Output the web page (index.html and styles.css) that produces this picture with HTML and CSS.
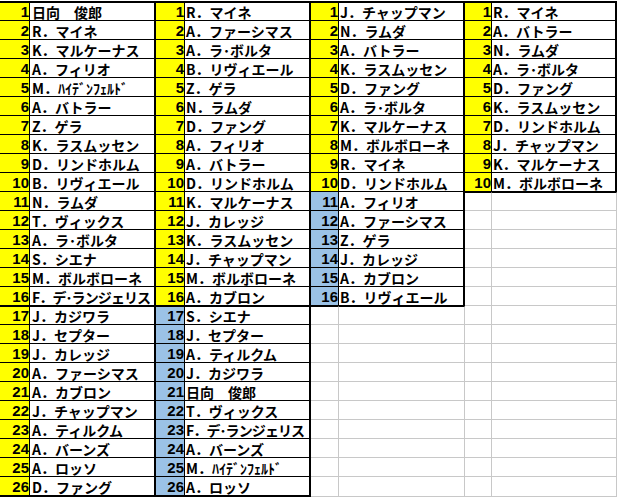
FILE: index.html
```html
<!DOCTYPE html>
<html lang="ja">
<head>
<meta charset="utf-8">
<title>Sheet</title>
<link rel="stylesheet" href="styles.css">
</head>
<body>
<div class="sheet">
  <div class="pair p1">
    <div class="c n">1</div><div class="c t">日向　俊郎</div>
    <div class="c n">2</div><div class="c t">R．マイネ</div>
    <div class="c n">3</div><div class="c t">K．マルケーナス</div>
    <div class="c n">4</div><div class="c t">A．フィリオ</div>
    <div class="c n">5</div><div class="c t">M．ﾊｲﾃﾞﾝﾌｪﾙﾄﾞ</div>
    <div class="c n">6</div><div class="c t">A．バトラー</div>
    <div class="c n">7</div><div class="c t">Z．ゲラ</div>
    <div class="c n">8</div><div class="c t">K．ラスムッセン</div>
    <div class="c n">9</div><div class="c t">D．リンドホルム</div>
    <div class="c n">10</div><div class="c t">B．リヴィエール</div>
    <div class="c n">11</div><div class="c t">N．ラムダ</div>
    <div class="c n">12</div><div class="c t">T．ヴィックス</div>
    <div class="c n">13</div><div class="c t">A．ラ･ボルタ</div>
    <div class="c n">14</div><div class="c t">S．シエナ</div>
    <div class="c n">15</div><div class="c t">M．ボルボローネ</div>
    <div class="c n">16</div><div class="c t tight">F．デ･ランジェリス</div>
    <div class="c n tt">17</div><div class="c t tt">J．カジワラ</div>
    <div class="c n">18</div><div class="c t">J．セプター</div>
    <div class="c n">19</div><div class="c t">J．カレッジ</div>
    <div class="c n">20</div><div class="c t">A．ファーシマス</div>
    <div class="c n">21</div><div class="c t">A．カブロン</div>
    <div class="c n">22</div><div class="c t">J．チャップマン</div>
    <div class="c n">23</div><div class="c t">A．ティルクム</div>
    <div class="c n">24</div><div class="c t">A．バーンズ</div>
    <div class="c n">25</div><div class="c t">A．ロッソ</div>
    <div class="c n tb">26</div><div class="c t tb">D．ファング</div>
  </div>
  <div class="pair p2">
    <div class="c n">1</div><div class="c t">R．マイネ</div>
    <div class="c n">2</div><div class="c t">A．ファーシマス</div>
    <div class="c n">3</div><div class="c t">A．ラ･ボルタ</div>
    <div class="c n">4</div><div class="c t">B．リヴィエール</div>
    <div class="c n">5</div><div class="c t">Z．ゲラ</div>
    <div class="c n">6</div><div class="c t">N．ラムダ</div>
    <div class="c n">7</div><div class="c t">D．ファング</div>
    <div class="c n">8</div><div class="c t">A．フィリオ</div>
    <div class="c n">9</div><div class="c t">A．バトラー</div>
    <div class="c n">10</div><div class="c t">D．リンドホルム</div>
    <div class="c n">11</div><div class="c t">K．マルケーナス</div>
    <div class="c n">12</div><div class="c t">J．カレッジ</div>
    <div class="c n">13</div><div class="c t">K．ラスムッセン</div>
    <div class="c n">14</div><div class="c t">J．チャップマン</div>
    <div class="c n">15</div><div class="c t">M．ボルボローネ</div>
    <div class="c n">16</div><div class="c t">A．カブロン</div>
    <div class="c n b tt">17</div><div class="c t tt">S．シエナ</div>
    <div class="c n b">18</div><div class="c t">J．セプター</div>
    <div class="c n b">19</div><div class="c t">A．ティルクム</div>
    <div class="c n b">20</div><div class="c t">J．カジワラ</div>
    <div class="c n b">21</div><div class="c t">日向　俊郎</div>
    <div class="c n b">22</div><div class="c t">T．ヴィックス</div>
    <div class="c n b">23</div><div class="c t tight">F．デ･ランジェリス</div>
    <div class="c n b">24</div><div class="c t">A．バーンズ</div>
    <div class="c n b">25</div><div class="c t">M．ﾊｲﾃﾞﾝﾌｪﾙﾄﾞ</div>
    <div class="c n b tb">26</div><div class="c t tb">A．ロッソ</div>
  </div>
  <div class="pair p3">
    <div class="c n">1</div><div class="c t">J．チャップマン</div>
    <div class="c n">2</div><div class="c t">N．ラムダ</div>
    <div class="c n">3</div><div class="c t">A．バトラー</div>
    <div class="c n">4</div><div class="c t">K．ラスムッセン</div>
    <div class="c n">5</div><div class="c t">D．ファング</div>
    <div class="c n">6</div><div class="c t">A．ラ･ボルタ</div>
    <div class="c n">7</div><div class="c t">K．マルケーナス</div>
    <div class="c n">8</div><div class="c t">M．ボルボローネ</div>
    <div class="c n">9</div><div class="c t">R．マイネ</div>
    <div class="c n">10</div><div class="c t">D．リンドホルム</div>
    <div class="c n b">11</div><div class="c t">A．フィリオ</div>
    <div class="c n b">12</div><div class="c t">A．ファーシマス</div>
    <div class="c n b">13</div><div class="c t">Z．ゲラ</div>
    <div class="c n b">14</div><div class="c t">J．カレッジ</div>
    <div class="c n b">15</div><div class="c t">A．カブロン</div>
    <div class="c n b">16</div><div class="c t">B．リヴィエール</div>
    <div class="c e tt"></div><div class="c e tt"></div>
    <div class="c e"></div><div class="c e"></div>
    <div class="c e"></div><div class="c e"></div>
    <div class="c e"></div><div class="c e"></div>
    <div class="c e"></div><div class="c e"></div>
    <div class="c e"></div><div class="c e"></div>
    <div class="c e"></div><div class="c e"></div>
    <div class="c e"></div><div class="c e"></div>
    <div class="c e"></div><div class="c e"></div>
    <div class="c e"></div><div class="c e"></div>
  </div>
  <div class="pair p4">
    <div class="c n">1</div><div class="c t">R．マイネ</div>
    <div class="c n">2</div><div class="c t">A．バトラー</div>
    <div class="c n">3</div><div class="c t">N．ラムダ</div>
    <div class="c n">4</div><div class="c t">A．ラ･ボルタ</div>
    <div class="c n">5</div><div class="c t">D．ファング</div>
    <div class="c n">6</div><div class="c t">K．ラスムッセン</div>
    <div class="c n">7</div><div class="c t">D．リンドホルム</div>
    <div class="c n">8</div><div class="c t">J．チャップマン</div>
    <div class="c n">9</div><div class="c t">K．マルケーナス</div>
    <div class="c n">10</div><div class="c t">M．ボルボローネ</div>
    <div class="c e tt"></div><div class="c e tt"></div>
    <div class="c e"></div><div class="c e"></div>
    <div class="c e"></div><div class="c e"></div>
    <div class="c e"></div><div class="c e"></div>
    <div class="c e"></div><div class="c e"></div>
    <div class="c e"></div><div class="c e"></div>
    <div class="c e"></div><div class="c e"></div>
    <div class="c e"></div><div class="c e"></div>
    <div class="c e"></div><div class="c e"></div>
    <div class="c e"></div><div class="c e"></div>
    <div class="c e"></div><div class="c e"></div>
    <div class="c e"></div><div class="c e"></div>
    <div class="c e"></div><div class="c e"></div>
    <div class="c e"></div><div class="c e"></div>
    <div class="c e"></div><div class="c e"></div>
    <div class="c e"></div><div class="c e"></div>
  </div>
</div>
</body>
</html>
```

FILE: styles.css
```css
html, body {
  margin: 0;
  padding: 0;
  background: #ffffff;
}

.sheet {
  display: flex;
  padding-top: 1px;
  width: 617px;
  overflow: hidden;
}

.pair {
  display: grid;
  grid-template-rows: 20px repeat(24, 19px) 20px;
  flex: none;
}

.p1 { grid-template-columns: 30px 126px; }
.p2 { grid-template-columns: 29px 126px; }
.p3 { grid-template-columns: 28px 126px; }
.p4 { grid-template-columns: 27px 125px; }

.c {
  box-sizing: border-box;
  display: flex;
  align-items: flex-end;
  overflow: hidden;
  white-space: nowrap;
  line-height: 16px;
  border-bottom: 1px solid #000;
}

.pair > .c:nth-child(-n+2) {
  border-top: 2px solid #000;
}

.n {
  justify-content: flex-end;
  background: #ffff00;
  border-right: 1px solid #000;
  font-family: "Liberation Sans", Arial, sans-serif;
  font-weight: bold;
  font-size: 15px;
  padding-right: 0;
}

.n.b {
  background: #9bc2e6;
}

.t {
  border-right: 2px solid #000;
  font-family: "Noto Sans CJK JP", sans-serif;
  font-weight: bold;
  font-size: 14px;
  padding-left: 1px;
  color: #000;
}

.p1 .t { padding-left: 2px; }

.t.tight {
  letter-spacing: -0.9px;
}

.e {
  border-right: 1px solid #c8c8c8;
  border-bottom: 1px solid #c8c8c8;
}

.tt {
  border-top: 1px solid #000;
}

.tb {
  border-bottom-width: 2px;
}
```
